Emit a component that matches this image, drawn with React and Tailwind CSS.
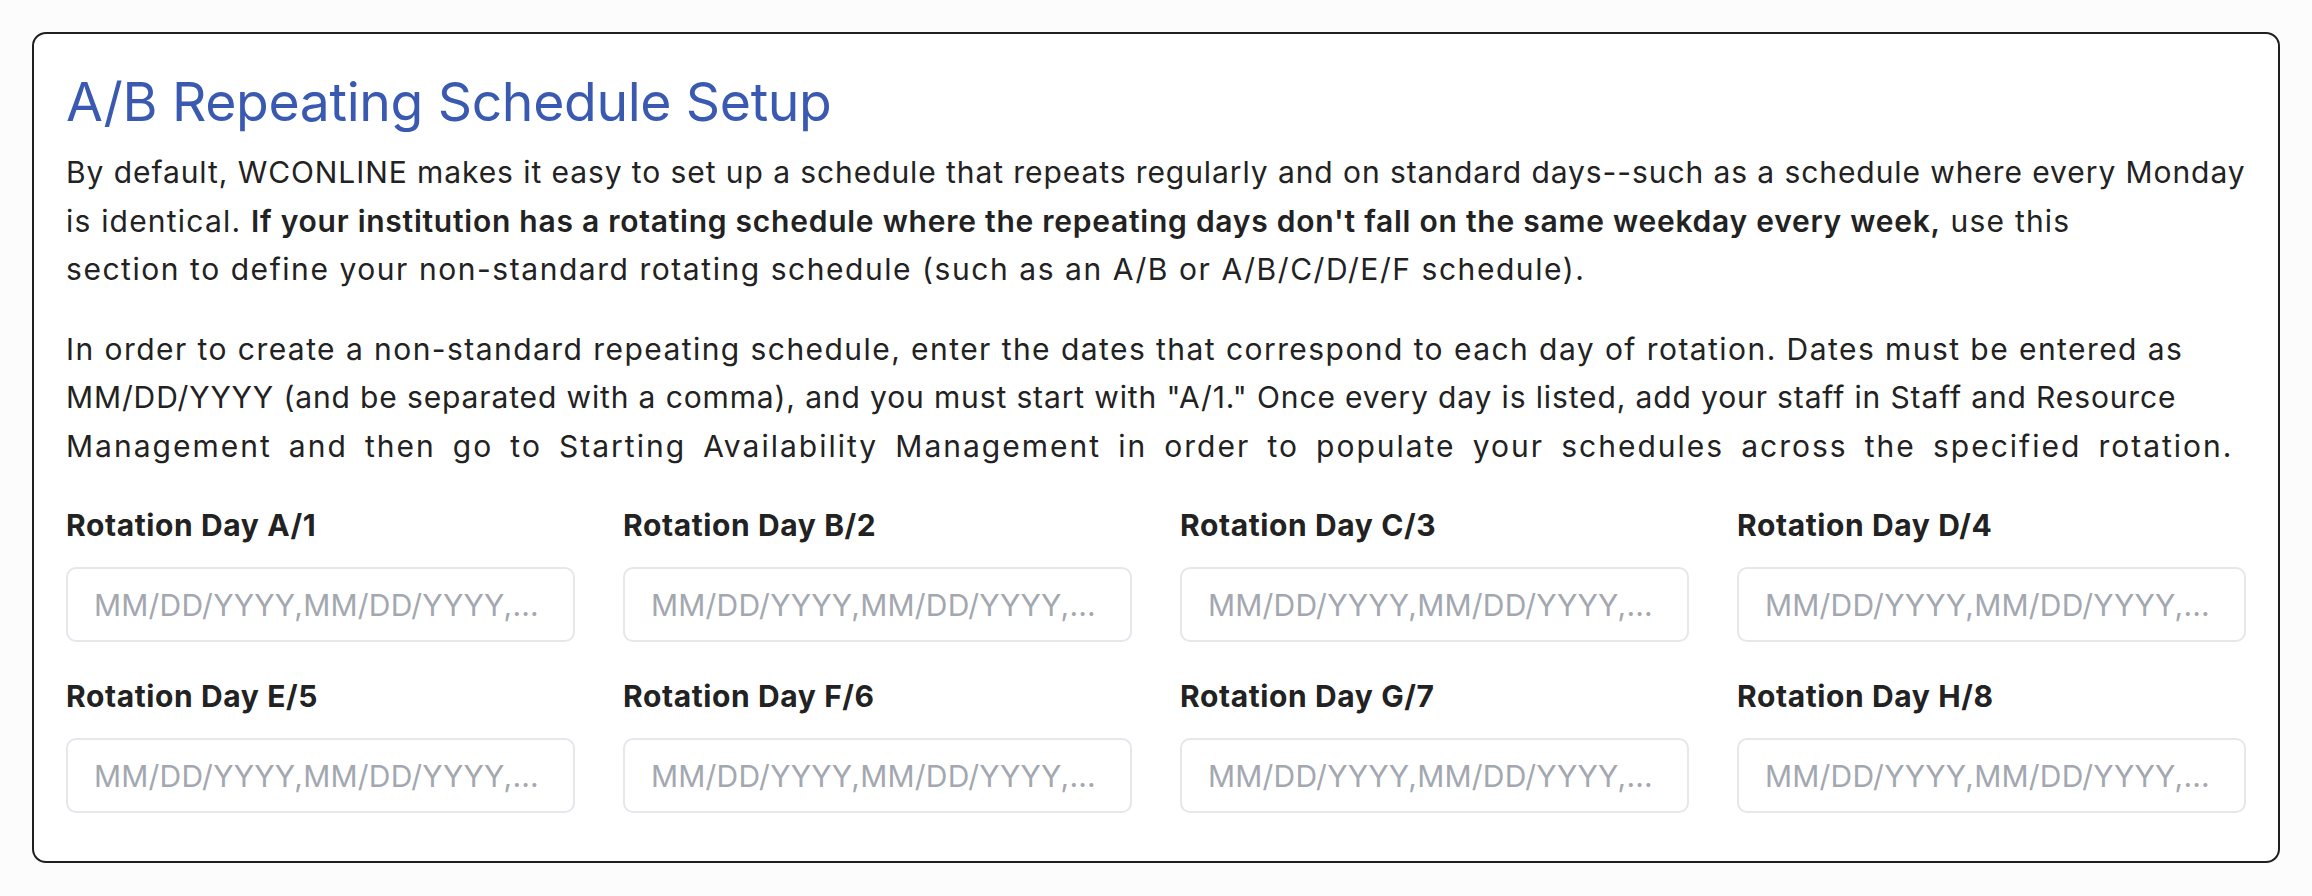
import React from "react";

const days = ["A/1", "B/2", "C/3", "D/4", "E/5", "F/6", "G/7", "H/8"];

export default function App() {
  return (
    <div className="min-h-[896px] w-full bg-[#fcfcfc] p-[32px] [font-family:Inter,'Noto_Sans',sans-serif]">
      <div className="rounded-[14px] border-2 border-[#1f1f1f] bg-white px-[32px] pt-[32px] pb-[48px]">
        <h1 className="text-[53.5px] leading-[72px] font-normal text-[#3a5ab2] tracking-[-0.35px]">
          A/B Repeating Schedule Setup
        </h1>
        <div className="mt-[10px] text-[30px] leading-[48.5px] text-[#222222]">
          <p>
            <span className="block whitespace-nowrap tracking-[0.92px]">
              By default, WCONLINE makes it easy to set up a schedule that repeats regularly and on standard days--such as a schedule where every Monday
            </span>
            <span className="block whitespace-nowrap tracking-[1.2px]">
              is identical.{" "}
              <strong className="font-semibold tracking-[0.75px]">
                If your institution has a rotating schedule where the repeating days don't fall on the same weekday every week,
              </strong>{" "}
              use this
            </span>
            <span className="block whitespace-nowrap tracking-[1.55px]">
              section to define your non-standard rotating schedule (such as an A/B or A/B/C/D/E/F schedule).
            </span>
          </p>
          <p className="mt-[31px]">
            <span className="block whitespace-nowrap tracking-[1.44px]">
              In order to create a non-standard repeating schedule, enter the dates that correspond to each day of rotation. Dates must be entered as
            </span>
            <span className="block whitespace-nowrap tracking-[0.87px]">
              MM/DD/YYYY (and be separated with a comma), and you must start with "A/1." Once every day is listed, add your staff in Staff and Resource
            </span>
            <span className="block whitespace-nowrap tracking-[2px] [word-spacing:6.7px]">
              Management and then go to Starting Availability Management in order to populate your schedules across the specified rotation.
            </span>
          </p>
        </div>
        <div className="mt-[34px] grid grid-cols-4 gap-x-[48px] gap-y-[33px]">
          {days.map((d) => (
            <div key={d} className="flex flex-col">
              <label className="text-[30px] leading-[42px] font-bold tracking-[0.6px] text-[#222222]">
                Rotation Day {d}
              </label>
              <input
                type="text"
                placeholder="MM/DD/YYYY,MM/DD/YYYY,..."
                className="mt-[21px] h-[75px] w-full rounded-[10px] border-2 border-[#e5e7eb] bg-white px-[26px] text-[30px] tracking-[0.2px] text-[#222222] placeholder:text-[#a3a8b0] outline-none"
              />
            </div>
          ))}
        </div>
      </div>
    </div>
  );
}
